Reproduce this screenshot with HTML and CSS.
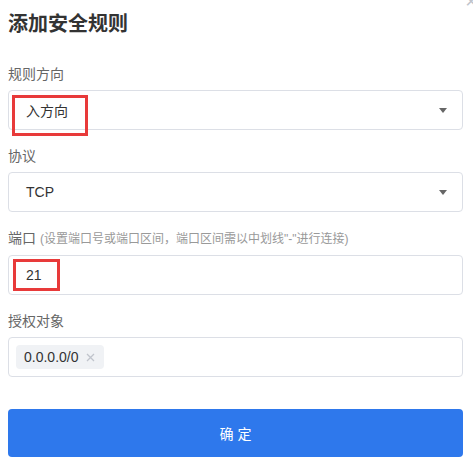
FILE: index.html
```html
<!DOCTYPE html>
<html lang="zh-CN">
<head>
<meta charset="utf-8">
<title>添加安全规则</title>
<link rel="stylesheet" href="styles.css">
</head>
<body>
<div class="dialog">
  <span class="close">×</span>
  <h1 class="title">添加安全规则</h1>

  <div class="item">
    <div class="label">规则方向</div>
    <div class="field select">
      <span class="value">入方向</span>
      <span class="arrow"></span>
    </div>
    <span class="mark mark-dir"></span>
  </div>

  <div class="item">
    <div class="label">协议</div>
    <div class="field select">
      <span class="value">TCP</span>
      <span class="arrow"></span>
    </div>
  </div>

  <div class="item">
    <div class="label">端口 <span class="hint">(设置端口号或端口区间，端口区间需以中划线"-"进行连接)</span></div>
    <div class="field">
      <span class="value">21</span>
    </div>
    <span class="mark mark-port"></span>
  </div>

  <div class="item">
    <div class="label">授权对象</div>
    <div class="field tags">
      <span class="tag">0.0.0.0/0<svg class="tag-x" width="9" height="9" viewBox="0 0 9 9"><path d="M1 1L8 8M8 1L1 8" stroke="#c0c4cc" stroke-width="1.3" fill="none"/></svg></span>
    </div>
  </div>

  <button class="submit">确 定</button>
</div>
</body>
</html>
```

FILE: styles.css
```css
html, body {
  margin: 0;
  padding: 0;
  background: #fff;
}
body {
  font-family: "Liberation Sans", "Noto Sans CJK SC", sans-serif;
  color: #333;
  overflow: hidden;
}
.dialog {
  position: relative;
  width: 455px;
  padding: 10px 10px 0 8px;
}
.close {
  position: absolute;
  right: -4px;
  top: -9px;
  font-size: 20px;
  line-height: 20px;
  color: #c0c4cc;
}
.title {
  margin: 0 0 26px;
  font-size: 20px;
  line-height: 28px;
  font-weight: bold;
  color: #333;
}
.item {
  position: relative;
  margin-bottom: 16px;
}
.label {
  font-size: 14px;
  line-height: 20px;
  color: #666;
  margin-bottom: 6px;
}
.hint {
  font-size: 12px;
  color: #999;
}
.field {
  box-sizing: border-box;
  height: 40px;
  border: 1px solid #dcdfe6;
  border-radius: 4px;
  display: flex;
  align-items: center;
  padding: 0 15px 0 17px;
}
.value {
  font-size: 14px;
  color: #333;
  flex: 1;
}
.arrow {
  width: 0;
  height: 0;
  border-left: 4px solid transparent;
  border-right: 4px solid transparent;
  border-top: 5px solid #666;
  margin-top: 1px;
}
.tags {
  padding-left: 7px;
}
.tag {
  display: inline-flex;
  align-items: center;
  height: 24px;
  padding: 0 9px 0 8px;
  background: #f0f2f5;
  border-radius: 4px;
  font-size: 14px;
  color: #333;
}
.tag-x {
  margin-left: 7px;
  margin-top: 1px;
}
.mark {
  position: absolute;
  border: 3px solid #e83a3a;
  box-sizing: border-box;
}
.mark-dir {
  left: 4px;
  top: 31px;
  width: 76px;
  height: 41px;
}
.mark-port {
  left: 5px;
  top: 31px;
  width: 47px;
  height: 32px;
}
.submit {
  display: block;
  width: 100%;
  height: 48px;
  margin-top: 32px;
  border: none;
  border-radius: 4px;
  background: #2e78ec;
  color: #fff;
  font-family: "Liberation Sans", "Noto Sans CJK SC", sans-serif;
  font-size: 14px;
}
```
